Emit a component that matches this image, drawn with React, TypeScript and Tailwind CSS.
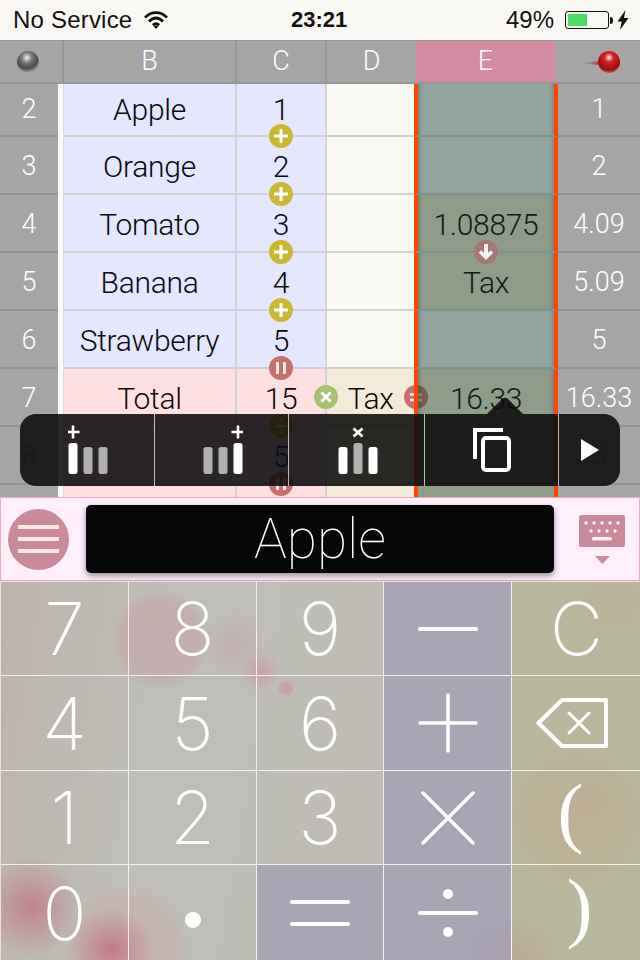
import React from 'react';

type Badge = 'plus' | 'pause' | 'divide';

type Row = {
  n: string;
  b: string;
  c: string;
  d: string;
  e: string;
  r: string;
  total: boolean;
  filled: boolean;
  badge?: Badge;
};

const rows: Row[] = [
  { n: '2', b: 'Apple', c: '1', d: '', e: '', r: '1', total: false, filled: false, badge: 'plus' },
  { n: '3', b: 'Orange', c: '2', d: '', e: '', r: '2', total: false, filled: false, badge: 'plus' },
  { n: '4', b: 'Tomato', c: '3', d: '', e: '1.08875', r: '4.09', total: false, filled: true, badge: 'plus' },
  { n: '5', b: 'Banana', c: '4', d: '', e: 'Tax', r: '5.09', total: false, filled: true, badge: 'plus' },
  { n: '6', b: 'Strawberry', c: '5', d: '', e: '', r: '5', total: false, filled: false, badge: 'pause' },
  { n: '7', b: 'Total', c: '15', d: 'Tax', e: '16.33', r: '16.33', total: true, filled: true, badge: 'divide' },
  { n: '8', b: '', c: '5', d: '', e: '', r: '5', total: true, filled: true, badge: 'pause' },
];

const Circle = ({ className, children }: { className: string; children: React.ReactNode }) => (
  <div className={`absolute w-6 h-6 rounded-full ${className}`}>
    <svg viewBox="0 0 24 24" className="w-6 h-6" fill="none" stroke="#fff" strokeWidth="3">
      {children}
    </svg>
  </div>
);

const BadgeIcon = ({ kind }: { kind: Badge }) => {
  if (kind === 'plus') {
    return (
      <Circle className="z-10 -bottom-[13px] left-[32px] bg-[#cbb832]">
        <path d="M5 12h14M12 5v14" />
      </Circle>
    );
  }
  if (kind === 'pause') {
    return (
      <Circle className="z-10 -bottom-[13px] left-[32px] bg-[#c67070]">
        <path d="M8.5 6v12M15.5 6v12" strokeOpacity="0.85" />
      </Circle>
    );
  }
  return (
    <Circle className="z-10 -bottom-[13px] left-[32px] bg-[#cbb832]">
      <path d="M6 12h12" strokeWidth="2.5" />
      <path d="M12 6v.1M12 18v.1" strokeLinecap="round" strokeWidth="3" />
    </Circle>
  );
};

const Bars = ({ mark, tall, glyph }: { mark: number; tall: number; glyph: 'plus' | 'x' }) => (
  <svg width="40" height="50" viewBox="0 0 40 50" className="ml-[2px]">
    {[0, 15, 30].map((x, i) => (
      <rect
        key={x}
        x={x + 0.5}
        y={i === tall ? 18 : 22}
        width="9"
        height={i === tall ? 31 : 27}
        rx="2.5"
        fill={(mark === -1 ? i !== tall : i === mark) ? '#fff' : '#b0b0b0'}
      />
    ))}
    {glyph === 'plus' ? (
      <path d={`M${tall * 15 + 5 - 6.5} 7h13M${tall * 15 + 5} 0.5v13`} stroke="#fff" strokeWidth="2.6" />
    ) : (
      <path d="M15.5 3.5l9 8M24.5 3.5l-9 8" stroke="#fff" strokeWidth="2.8" />
    )}
  </svg>
);

const Toolbar = () => (
  <div className="absolute left-5 top-[330px] z-20 w-[600px] h-[72px]">
    <svg className="absolute left-[467px] -top-[17px]" width="36" height="17" viewBox="0 0 36 17">
      <path d="M0 17L15.5 1.5Q18 0 20.5 1.5L36 17Z" fill="#0a0a0a" fillOpacity="0.87" />
    </svg>
    <div className="flex h-full rounded-[16px] bg-[#0a0a0a]/[0.87] overflow-hidden">
      <div className="w-[135px] flex items-center justify-center border-r border-white/70">
        <Bars mark={0} tall={0} glyph="plus" />
      </div>
      <div className="w-[134px] flex items-center justify-center border-r border-white/70">
        <Bars mark={2} tall={2} glyph="plus" />
      </div>
      <div className="w-[136px] flex items-center justify-center border-r border-white/70">
        <Bars mark={-1} tall={1} glyph="x" />
      </div>
      <div className="w-[134px] flex items-center justify-center border-r border-white/70">
        <svg width="38" height="44" viewBox="0 0 38 44" fill="none" stroke="#fff" strokeWidth="4">
          <path d="M2 31V2h28" />
          <rect x="10" y="10" width="26" height="32" rx="3" />
        </svg>
      </div>
      <div className="flex-1 flex items-center justify-center">
        <svg width="18" height="22" viewBox="0 0 18 22">
          <path d="M0 0l18 11L0 22z" fill="#fff" />
        </svg>
      </div>
    </div>
  </div>
);

const StatusBar = () => (
  <div className="h-10 bg-[#f9f8f4] flex items-center relative font-['Liberation_Sans',sans-serif] text-[#111]">
    <span className="ml-[13px] text-[24px] leading-none tracking-[0.2px]">No Service</span>
    <svg className="ml-[12px]" width="24" height="18" viewBox="0 0 24 18" fill="none" stroke="#111" strokeWidth="2.6">
      <path d="M1 6.5C7.5 0 16.5 0 23 6.5" />
      <path d="M5 10.5C9.5 6 14.5 6 19 10.5" />
      <path d="M8.8 14C10.8 12.2 13.2 12.2 15.2 14" />
      <path d="M12 18l-3-3.5h6z" fill="#111" stroke="none" />
    </svg>
    <span className="absolute left-[291px] text-[22px] font-bold leading-none">23:21</span>
    <span className="absolute left-[506px] text-[24px] leading-none">49%</span>
    <div className="absolute left-[565px] top-[11px] w-[44px] h-[18px] rounded-[3px] border border-[#111] p-[2px]">
      <div className="w-[19px] h-full bg-[#4cd964]" />
    </div>
    <div className="absolute left-[610px] top-[17px] w-[3px] h-[7px] bg-[#111] rounded-r-sm" />
    <svg className="absolute left-[617px] top-[10px]" width="12" height="20" viewBox="0 0 12 20">
      <path d="M8.5 0L0.5 11.5h4.2L3 20l8.5-12H7z" fill="#111" />
    </svg>
  </div>
);

const SheetHeader = () => (
  <div className="grid grid-cols-[64px_173px_90px_89px_139px_85px] h-11 bg-[#a5a5a5] text-white text-[27px] font-['Roboto',sans-serif] font-light border-t border-[#959595] border-b-2 border-b-[#969696]">
    <div className="flex items-center justify-center border-r-2 border-[#959595] pr-[6px]">
      <svg width="22" height="22" viewBox="0 0 22 22">
        <defs>
          <radialGradient id="ball" cx="0.45" cy="0.3" r="0.7">
            <stop offset="0" stopColor="#eeeeee" />
            <stop offset="0.35" stopColor="#777" />
            <stop offset="0.7" stopColor="#4a4a4a" />
            <stop offset="1" stopColor="#aaa" />
          </radialGradient>
        </defs>
        <circle cx="11" cy="11" r="11" fill="url(#ball)" />
      </svg>
    </div>
    <div className="flex items-center justify-center border-r-2 border-[#959595]">B</div>
    <div className="flex items-center justify-center border-r-2 border-[#959595]">C</div>
    <div className="flex items-center justify-center">D</div>
    <div className="flex items-center justify-center bg-[#d48aa0]">E</div>
    <div className="flex items-center justify-center pl-[2px]">
      <svg width="42" height="22" viewBox="0 0 42 22">
        <defs>
          <radialGradient id="pin" cx="0.5" cy="0.3" r="0.7">
            <stop offset="0" stopColor="#f8e4e4" />
            <stop offset="0.3" stopColor="#d42222" />
            <stop offset="0.8" stopColor="#9c0d0d" />
            <stop offset="1" stopColor="#c86060" />
          </radialGradient>
          <linearGradient id="needle" x1="0" x2="1" y1="0" y2="0">
            <stop offset="0" stopColor="#b08080" stopOpacity="0.1" />
            <stop offset="1" stopColor="#8c4a4a" />
          </linearGradient>
        </defs>
        <path d="M0 12.5L22 10v4z" fill="url(#needle)" />
        <circle cx="31" cy="11" r="11" fill="url(#pin)" />
      </svg>
    </div>
  </div>
);

const Sheet = () => (
  <div className="relative h-[413px] overflow-hidden bg-[#faf9f5] font-['Roboto',sans-serif] font-light text-[30px] tracking-[-0.3px] text-[#0a0a0a]">
    {rows.map((row, i) => {
      const pad = i === 0 ? '' : 'pt-[3px]';
      return (
        <div
          key={row.n}
          className={`grid grid-cols-[58px_6px_173px_90px_87px_144px_82px] ${i === 0 ? 'h-[53px]' : 'h-[58px]'}`}
        >
          <div className={`flex items-center justify-center bg-[#a5a5a5] border-b-2 border-[#939393] text-white text-[27px] tracking-normal ${pad}`}>
            {i === 6 ? <span className="text-[#6f6f6f]">{row.n}</span> : row.n}
          </div>
          <div className="bg-[#faf9f5] border-r border-[#dedbd2]" />
          <div className={`flex items-center justify-center border-r-2 border-b-2 border-[#d2d2d2] ${pad} ${row.total ? 'bg-[#ffe0e2]' : 'bg-[#e5e6ff]'}`}>
            {row.b}
          </div>
          <div className={`relative flex items-center justify-center border-r-2 border-b-2 border-[#d2d2d2] ${pad} ${row.total ? 'bg-[#ffe0e2]' : 'bg-[#e5e6ff]'}`}>
            {i === 6 ? <span className="text-[#0000c0]">{row.c}</span> : row.c}
            {row.badge && <BadgeIcon kind={row.badge} />}
          </div>
          <div className={`relative flex items-center justify-center border-b-2 border-[#d2d2d2] ${pad} ${row.total ? 'bg-[#f3ead9]' : 'bg-[#faf9f5]'}`}>
            {row.d}
            {row.d && (
              <>
                <Circle className="z-10 left-[-13px] top-[16px] bg-[#a8c272]">
                  <path d="M7.5 7.5l9 9M16.5 7.5l-9 9" />
                </Circle>
                <Circle className="right-[-14px] top-[16px] bg-[#c67070]">
                  <path d="M6 9.5h12M6 15h12" strokeOpacity="0.85" strokeWidth="2.5" />
                </Circle>
              </>
            )}
          </div>
          <div
            className={`relative flex items-center justify-center border-x-4 border-x-[#ff4500] border-b-2 border-b-[#7f938f] text-[#0c1a18] shadow-[inset_5px_0_4px_-4px_rgba(0,0,0,0.25),inset_-5px_0_4px_-4px_rgba(0,0,0,0.25)] ${pad} ${row.filled ? 'bg-[#375032]/[0.55]' : 'bg-[#3c5f5a]/[0.55]'}`}
          >
            {row.e}
            {row.e === '1.08875' && (
              <Circle className="z-10 -bottom-[13px] left-[56px] bg-[#a57878]">
                <path d="M12 4v12" strokeWidth="4" strokeOpacity="0.9" />
                <path d="M6 11.5l6 6 6-6" strokeWidth="3.5" strokeOpacity="0.9" />
              </Circle>
            )}
          </div>
          <div className={`flex items-center justify-center bg-[#a5a5a5] border-b-2 border-[#939393] text-white text-[27px] tracking-normal ${pad}`}>
            {i === 6 ? <span className="text-[#6f6f6f]">{row.r}</span> : row.r}
          </div>
        </div>
      );
    })}
    <div className="grid grid-cols-[58px_6px_173px_90px_87px_144px_82px] h-[12px]">
      <div className="bg-[#a5a5a5]" />
      <div className="bg-[#faf9f5] border-r border-[#dedbd2]" />
      <div className="bg-[#ffe0e2] border-r-2 border-[#d2d2d2]" />
      <div className="bg-[#ffe0e2] border-r-2 border-[#d2d2d2]" />
      <div className="bg-[#f3ead9]" />
      <div className="bg-[#375032]/[0.55] border-x-4 border-x-[#ff4500]" />
      <div className="bg-[#a5a5a5]" />
    </div>
    <Toolbar />
  </div>
);

const InputBar = () => (
  <div className="h-[84px] bg-[#fdf0fb] border border-[#eaa9bd] flex items-center relative">
    <div className="ml-[7px] w-[61px] h-[61px] rounded-full bg-[#c98a9b] flex flex-col items-center justify-center gap-2">
      <div className="w-[41px] h-1 bg-[#fbe9e4]" />
      <div className="w-[41px] h-1 bg-[#fbe9e4]" />
      <div className="w-[41px] h-1 bg-[#fbe9e4]" />
    </div>
    <div className="ml-[17px] w-[468px] h-[68px] rounded-[5px] bg-[#060606] shadow-[0_3px_6px_rgba(80,60,80,0.55)] flex items-center justify-center text-white text-[55px] font-['Roboto',sans-serif] font-thin">
      Apple
    </div>
    <div className="ml-[25px] mt-[2px] flex flex-col items-center">
      <svg width="46" height="50" viewBox="0 0 46 50">
        <rect width="46" height="32" rx="2" fill="#c98a9b" />
        {[5, 13, 21, 29, 37].map(x => (
          <circle key={x} cx={x + 2} cy="8" r="1.7" fill="#fdf0fb" />
        ))}
        {[10, 18, 26, 34].map(x => (
          <circle key={x} cx={x + 2} cy="16" r="1.7" fill="#fdf0fb" />
        ))}
        <rect x="13" y="22" width="20" height="3.5" rx="1.5" fill="#fdf0fb" />
        <path d="M16 41h15l-7.5 8z" fill="#c98a9b" />
      </svg>
    </div>
  </div>
);

const digit = "text-white text-[73px] font-['Inter',sans-serif] font-[250] leading-none";
const paren = "text-white text-[78px] leading-none font-['Liberation_Serif',serif]";

const ops: Record<string, React.ReactNode> = {
  minus: (
    <svg width="60" height="6" viewBox="0 0 60 6">
      <path d="M2 3h56" stroke="#fff" strokeWidth="4" strokeLinecap="round" />
    </svg>
  ),
  plus: (
    <svg width="60" height="60" viewBox="0 0 60 60">
      <path d="M2 30h56M30 2v56" stroke="#fff" strokeWidth="3.5" strokeLinecap="round" />
    </svg>
  ),
  times: (
    <svg width="54" height="54" viewBox="0 0 54 54">
      <path d="M2 2l50 50M52 2L2 52" stroke="#fff" strokeWidth="3.5" strokeLinecap="round" />
    </svg>
  ),
  equals: (
    <svg width="60" height="28" viewBox="0 0 60 28">
      <path d="M2 3h56M2 25h56" stroke="#fff" strokeWidth="4" strokeLinecap="round" />
    </svg>
  ),
  divide: (
    <svg width="60" height="50" viewBox="0 0 60 50">
      <path d="M2 25h56" stroke="#fff" strokeWidth="4" strokeLinecap="round" />
      <circle cx="30" cy="6" r="5" fill="#fff" />
      <circle cx="30" cy="44" r="5" fill="#fff" />
    </svg>
  ),
  back: (
    <svg width="72" height="50" viewBox="0 0 72 50" fill="none" stroke="#fff" strokeWidth="4" className="-ml-[10px]">
      <path d="M2.5 25L26 2h44v46H26z" strokeLinejoin="round" />
      <path d="M33 15l20 20M53 15L33 35" strokeWidth="3" strokeLinecap="round" />
    </svg>
  ),
};

const Key = ({ tone, children, last, bottom }: { tone: string; children: React.ReactNode; last?: boolean; bottom?: boolean }) => (
  <div
    className={`flex items-center justify-center border-[#f5f1ee] ${tone} ${last ? '' : 'border-r'} ${bottom ? '' : 'border-b'}`}
  >
    {children}
  </div>
);

const opTone = 'bg-[#a5a3b5]/90';
const sideTone = 'bg-[#b5b797]/75';

const Keypad = () => (
  <div className="h-[379px] grid grid-cols-[128px_128px_127px_128px_129px] grid-rows-[94px_95px_94px_96px] border-t border-l border-[#f3dfe3] bg-[radial-gradient(circle_at_160px_58px,rgba(205,135,150,0.32)_0,rgba(205,135,150,0.26)_38px,transparent_50px),radial-gradient(circle_at_233px_62px,rgba(205,135,150,0.25)_0,transparent_32px),radial-gradient(circle_at_260px_90px,rgba(215,125,145,0.45)_0,transparent_20px),radial-gradient(circle_at_285px_106px,rgba(215,130,150,0.5)_0,rgba(215,130,150,0.4)_6px,transparent_9px),radial-gradient(circle_at_30px_325px,rgba(190,95,115,0.6)_0,transparent_50px),radial-gradient(circle_at_110px_368px,rgba(190,90,115,0.62)_0,transparent_42px),radial-gradient(circle_at_125px_365px,rgba(215,150,150,0.3)_0,rgba(215,150,150,0.18)_50px,transparent_62px),radial-gradient(circle_at_575px_235px,rgba(220,130,120,0.55)_0,rgba(220,130,120,0.35)_55px,transparent_72px),radial-gradient(circle_at_590px_218px,rgba(215,100,100,0.5)_0,transparent_20px),radial-gradient(circle_at_610px_20px,rgba(220,130,130,0.45)_0,transparent_45px),radial-gradient(circle_at_505px_380px,rgba(200,90,130,0.6)_0,transparent_55px),radial-gradient(circle_at_520px_380px,rgba(220,120,110,0.35)_0,transparent_40px),linear-gradient(100deg,#bdb5ad_0,#bfbeb8_25%,#bdbab1_100%)]">
    <Key tone=""><span className={digit}>7</span></Key>
    <Key tone=""><span className={digit}>8</span></Key>
    <Key tone=""><span className={digit}>9</span></Key>
    <Key tone={opTone}>{ops.minus}</Key>
    <Key tone={sideTone} last><span className={digit}>C</span></Key>

    <Key tone=""><span className={digit}>4</span></Key>
    <Key tone=""><span className={digit}>5</span></Key>
    <Key tone=""><span className={digit}>6</span></Key>
    <Key tone={opTone}>{ops.plus}</Key>
    <Key tone={sideTone} last>{ops.back}</Key>

    <Key tone=""><span className={digit}>1</span></Key>
    <Key tone=""><span className={digit}>2</span></Key>
    <Key tone=""><span className={digit}>3</span></Key>
    <Key tone={opTone}>{ops.times}</Key>
    <Key tone={sideTone} last><span className={`${paren} -ml-[12px] -mt-[12px]`}>(</span></Key>

    <Key tone="" bottom><span className={digit}>0</span></Key>
    <Key tone="" bottom><div className="w-4 h-4 rounded-full bg-white mt-[14px]" /></Key>
    <Key tone={opTone} bottom>{ops.equals}</Key>
    <Key tone={opTone} bottom>{ops.divide}</Key>
    <Key tone={sideTone} last bottom><span className={`${paren} ml-[6px] -mt-[12px]`}>)</span></Key>
  </div>
);

const App = () => {
  return (
    <div className="w-[640px] h-[960px] overflow-hidden bg-white">
      <StatusBar />
      <SheetHeader />
      <Sheet />
      <InputBar />
      <Keypad />
    </div>
  );
};

export default App;
